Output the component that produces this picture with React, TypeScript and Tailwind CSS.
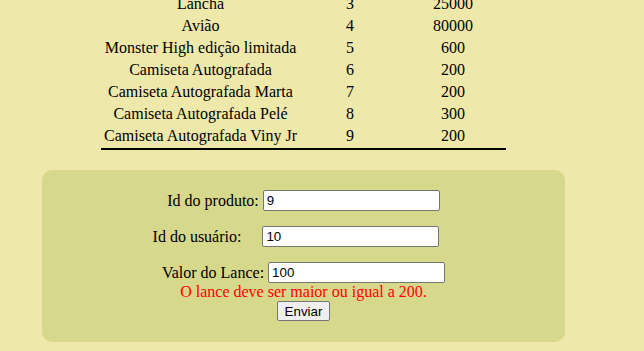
const produtos = [
  { nome: 'Lancha', id: 3, valor: 25000 },
  { nome: 'Avião', id: 4, valor: 80000 },
  { nome: 'Monster High edição limitada', id: 5, valor: 600 },
  { nome: 'Camiseta Autografada', id: 6, valor: 200 },
  { nome: 'Camiseta Autografada Marta', id: 7, valor: 200 },
  { nome: 'Camiseta Autografada Pelé', id: 8, valor: 300 },
  { nome: 'Camiseta Autografada Viny Jr', id: 9, valor: 200 },
];

function Campo({ label, value, className }: { label: string; value: string; className?: string }) {
  return (
    <div className={'flex items-center justify-center h-[21px] ' + (className ?? '')}>
      <span className="leading-[18px]">{label}</span>
      <input
        readOnly
        value={value}
        className="w-[177px] h-[21px] bg-white border border-[#767676] rounded-[2px] px-[3px] text-[13.33px] text-black outline-none [font-family:Arial,'Liberation_Sans',sans-serif]"
      />
    </div>
  );
}

export default function App() {
  return (
    <div className="w-[644px] h-[351px] overflow-hidden bg-[#eee8aa] text-black text-[16px] [font-family:'Liberation_Serif','Times_New_Roman',serif]">
      <div className="ml-[101px] w-[405px] -mt-[8px] pb-[2px] border-b-2 border-black">
        {produtos.map((p) => (
          <div key={p.id} className="grid grid-cols-[199px_100px_106px] h-[22px] pt-[2px] items-center text-center leading-[18px]">
            <span>{p.nome}</span>
            <span>{p.id}</span>
            <span>{p.valor}</span>
          </div>
        ))}
      </div>

      <div className="ml-[42px] mt-[20px] w-[523px] h-[172px] rounded-[10px] bg-[#d6d88b] pt-[20px] flex flex-col">
        <Campo label="Id do produto:" value="9" className="gap-[4px]" />
        <Campo label="Id do usuário:" value="10" className="mt-[15px] gap-[21px] pr-[15px]" />
        <Campo label="Valor do Lance:" value="100" className="mt-[15px] gap-[4px]" />
        <p className="h-[18px] leading-[18px] text-center text-[#ff0000]">O lance deve ser maior ou igual a 200.</p>
        <div className="flex justify-center">
          <button className="h-[20px] w-[53px] bg-[#efefef] border border-[#767676] rounded-[2px] text-[13.33px] text-black [font-family:Arial,'Liberation_Sans',sans-serif]">
            Enviar
          </button>
        </div>
      </div>
    </div>
  );
}
